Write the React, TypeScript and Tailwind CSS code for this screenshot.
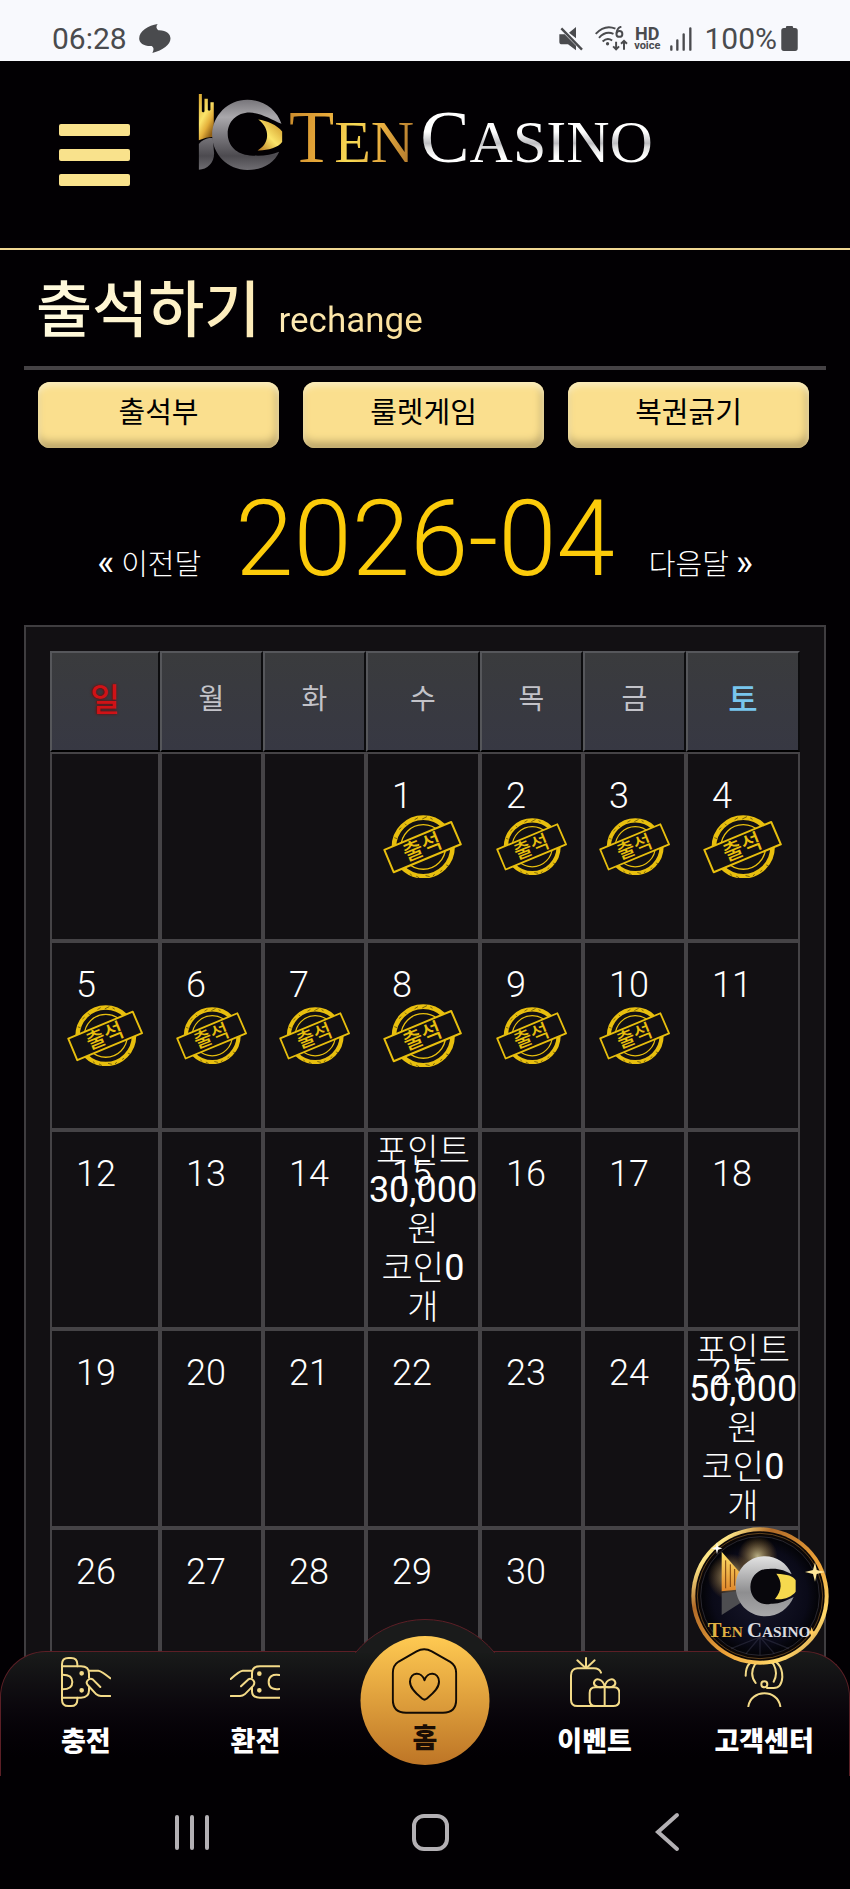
import React from "react";

const kr = "font-['Roboto','Noto_Sans_CJK_KR',sans-serif]";

function LogoMark({ className, id }: { className: string; id: string }) {
  return (
    <svg viewBox="55 40 255 235" className={className} aria-hidden="true">
      <defs>
        <linearGradient id={`${id}-silver`} gradientUnits="userSpaceOnUse" x1="0" y1="60" x2="0" y2="272">
          <stop offset="0" stopColor="#77757a" />
          <stop offset="0.25" stopColor="#aaa8ac" />
          <stop offset="0.5" stopColor="#7d7b80" />
          <stop offset="0.8" stopColor="#4c4a4f" />
          <stop offset="1" stopColor="#6f6d72" />
        </linearGradient>
        <linearGradient id={`${id}-gold`} x1="0" y1="0" x2="0.6" y2="1">
          <stop offset="0" stopColor="#d9a52c" />
          <stop offset="0.5" stopColor="#fbe46a" />
          <stop offset="0.75" stopColor="#e3ae3a" />
          <stop offset="1" stopColor="#8f5f16" />
        </linearGradient>
        <linearGradient id={`${id}-eye`} x1="0" y1="1" x2="0.8" y2="0">
          <stop offset="0" stopColor="#b5771f" />
          <stop offset="0.5" stopColor="#fbe56a" />
          <stop offset="1" stopColor="#d19a2c" />
        </linearGradient>
      </defs>
      <path d="M57 43H66V96Q70 101 74 96V57H84V91Q88 96 92 91V68H102V172Q78 173 57 182Z" fill={`url(#${id}-gold)`} />
      <path d="M57 194C68 180 84 175 99 176L103 222C103 250 82 270 57 271Z" fill={`url(#${id}-silver)`} />
      <path d="M306 133C292 90 252 60 203 60C145 60 97 108 97 166C97 225 145 272 203 272C248 272 284 252 299 217C272 229 245 230 210 228C172 226 144 199 144 163C144 126 172 99 210 99C245 100 275 120 306 133Z" fill={`url(#${id}-silver)`} />
      <path d="M236 120C262 124 292 136 308 156V188C295 206 262 214 234 213C270 194 274 148 236 120Z" fill={`url(#${id}-eye)`} />
    </svg>
  );
}

function Stamp() {
  return (
    <svg viewBox="0 0 238 192" className="mx-auto block w-[72%]" role="img" aria-label="출석">
      <g fill="none" stroke="#e8bf0e">
        <circle cx="121" cy="96" r="88" strokeWidth="14" />
        <circle cx="121" cy="96" r="67" strokeWidth="4" />
      </g>
      <g fill="none" stroke="#3a300c" strokeWidth="2">
        <path d="M95 14l10 -6M118 12l14 -7M142 9l7 4M48 44l7 -6M66 26l5 5M34 68l8 3M100 184l9 5M128 182l12 3M150 184l5 -6M172 170l6 -4M190 150l7 3M82 176l4 6" />
      </g>
      <path d="M4 105L205 21L234 88L32 172Z" fill="#121013" stroke="#e8bf0e" strokeWidth="6" strokeLinejoin="round" />
      <text x="118" y="119" textAnchor="middle" transform="rotate(-22 118 96)" fontSize="65" fontWeight="500" fill="#e8bf0e" fontFamily="'Noto Sans CJK KR', sans-serif">
        출석
      </text>
    </svg>
  );
}

function StatusBar() {
  return (
    <div className="flex h-[61px] shrink-0 items-center justify-between bg-[#f8f9fd] pt-4 pr-[52px] pl-[52px] text-[30px] text-[#4a4b4e]">
      <div className="flex items-center gap-3">
        <span>06:28</span>
        <svg viewBox="0 0 96 88" className="h-[29px] w-8" fill="#4a4b4e" aria-hidden="true">
          <path d="M56 0C50 8 52 14 58 19C82 18 95 30 95 44C95 62 72 80 40 88C44 80 46 72 38 67C14 68 0 58 0 44C0 22 28 4 56 0Z" />
        </svg>
      </div>
      <div className="flex items-center">
        <svg viewBox="0 0 70 72" className="mr-3 h-6 w-6" fill="#4a4b4e" aria-hidden="true">
          <path d="M0 22H16L50 56V70L26 52H8Q0 52 0 44ZM50 0V34L29 17Z" />
          <path d="M6 4L68 68" stroke="#4a4b4e" strokeWidth="7" />
        </svg>
        <svg viewBox="0 0 100 76" className="mr-[6px] h-[25px] w-[33px]" fill="none" stroke="#4a4b4e" strokeWidth="6" aria-hidden="true">
          <path d="M2 24Q30 -6 62 8M12 36Q32 14 56 24M23 47Q37 34 52 44" />
          <circle cx="38" cy="54" r="5" fill="#4a4b4e" stroke="none" />
          <circle cx="74" cy="24" r="9" />
          <path d="M66 22Q66 6 80 2M64 48V70M55 62L64 71L73 62M88 72V46M79 54L88 45L97 54" />
        </svg>
        <span className="mr-[10px] flex flex-col items-center font-bold">
          <span className="text-[18px] leading-[14px]">HD</span>
          <span className="text-[11px] leading-[10px]">voice</span>
        </span>
        <svg viewBox="0 0 66 72" className="mr-3 h-6 w-[22px]" stroke="#4a4b4e" strokeWidth="7" strokeLinecap="round" aria-hidden="true">
          <path d="M4 58V68M22 40V68M41 22V68M61 4V68" />
        </svg>
        <span>100%</span>
        <svg viewBox="0 0 50 76" className="ml-1 h-[25px] w-[17px]" fill="#4a4b4e" aria-hidden="true">
          <path d="M14 4Q14 0 18 0H32Q36 0 36 4V6H42Q50 6 50 14V68Q50 76 42 76H8Q0 76 0 68V14Q0 6 8 6H14Z" />
        </svg>
      </div>
    </div>
  );
}

function Header() {
  return (
    <header className="flex h-[189px] items-start border-b-2 border-[#f0d793] pl-[59px]">
      <button type="button" aria-label="메뉴" className="mt-[63px] flex w-[71px] flex-col gap-[13px]">
        <span className="h-3 rounded-[2px] bg-[#f9e28c]" />
        <span className="h-3 rounded-[2px] bg-[#f9e28c]" />
        <span className="h-3 rounded-[2px] bg-[#f9e28c]" />
      </button>
      <a href="#" className="mt-8 ml-[68px] flex items-start">
        <LogoMark id="top" className="h-[78px] w-[85px]" />
        <span className="ml-[6px] flex items-baseline gap-[6px] pt-2 font-['Liberation_Serif',serif] text-[60px] leading-[72px]">
          <span className="bg-[linear-gradient(100deg,#c98a2c_0%,#e8a93a_30%,#f8dc55_50%,#eab041_70%,#a8702a_100%)] bg-clip-text text-transparent">
            <span className="text-[74px]">T</span>EN
          </span>
          <span className="bg-[linear-gradient(180deg,#fff_40%,#bdbdc1_55%,#dededf_60%,#fff_72%)] bg-clip-text text-transparent">
            <span className="text-[74px]">C</span>ASINO
          </span>
        </span>
      </a>
    </header>
  );
}

const weekdays = ["일", "월", "화", "수", "목", "금", "토"];
const attended = [1, 2, 3, 4, 5, 6, 7, 8, 9, 10];
const rewards: Record<number, string> = { 15: "30,000", 25: "50,000" };
const weeks: (number | null)[][] = [0, 1, 2, 3, 4].map((w) =>
  [0, 1, 2, 3, 4, 5, 6].map((d) => {
    const n = w * 7 + d - 2;
    return n >= 1 && n <= 30 ? n : null;
  }),
);

function weekdayClass(i: number) {
  if (i === 0) return "text-[32px] font-medium text-[#d01216] [text-shadow:0_0_3px_#700]";
  if (i === 6) return "text-[32px] font-medium text-[#78c6ee]";
  return "text-[28px] font-normal text-[#c3c3c9]";
}

function Calendar() {
  return (
    <div className="mx-6 border-2 border-[#3f3d40] bg-[#121013] p-6">
      <table className="w-full table-fixed border-separate border-spacing-0">
        <colgroup>
          <col className="w-[110px]" />
          <col className="w-[103px]" />
          <col className="w-[103px]" />
          <col className="w-[114px]" />
          <col className="w-[103px]" />
          <col className="w-[103px]" />
          <col className="w-[114px]" />
        </colgroup>
        <thead>
          <tr className="h-[101px]">
            {weekdays.map((d, i) => (
              <th
                key={d}
                scope="col"
                className={`border-2 border-t-[#56575b] border-r-[#0c0c0e] border-b-black border-l-[#56575b] bg-linear-to-b from-[#3a3b3d] to-[#373843] p-0 pb-1 ${weekdayClass(i)}`}
              >
                {d}
              </th>
            ))}
          </tr>
        </thead>
        <tbody>
          {weeks.map((week, w) => (
            <tr key={w} className="h-[189px]">
              {week.map((day, i) => (
                <td key={i} className="relative border-2 border-[#454346] p-0 text-center align-middle">
                  {day !== null && (
                    <span className="absolute top-[21px] left-6 text-[36px] leading-[42px] font-light">{day}</span>
                  )}
                  {day !== null && attended.includes(day) && <Stamp />}
                  {day !== null && rewards[day] && (
                    <p className="text-[36px] leading-[39px] font-light">
                      <span className="text-[34px]">포인트</span>
                      <br />
                      <b className="font-normal">{rewards[day]}</b>
                      <br />
                      <span className="text-[34px]">원</span>
                      <br />
                      <span className="text-[34px]">코인</span>
                      <b className="font-normal">0</b>
                      <br />
                      <span className="text-[34px]">개</span>
                    </p>
                  )}
                </td>
              ))}
            </tr>
          ))}
        </tbody>
      </table>
    </div>
  );
}

function NavIcon({ children }: { children: React.ReactNode }) {
  return (
    <svg viewBox="0 0 150 150" className="size-[50px]" fill="none" stroke="#f3da88" strokeWidth="6" strokeLinecap="round" strokeLinejoin="round" aria-hidden="true">
      {children}
    </svg>
  );
}

const navItems = [
  {
    label: "충전",
    icon: (
      <NavIcon>
        <path d="M3 28V22Q3 3 22 3H30Q49 3 49 22V28M3 122V128Q3 147 22 147H30Q49 147 49 128V122M3 28V122" />
        <path d="M3 28H60Q84 28 84 50V62M3 122H60Q84 122 84 100V92M5 53Q34 53 34 75Q34 97 5 97" />
        <path d="M84 41H112Q122 42 148 64M118 90L96 68Q88 62 80 70Q74 76 80 84L106 112Q112 117 120 117H148" />
        <circle cx="62" cy="49" r="4" fill="#f3da88" />
        <circle cx="62" cy="100" r="4" fill="#f3da88" />
      </NavIcon>
    ),
  },
  {
    label: "환전",
    icon: (
      <NavIcon>
        <path d="M148 28H90Q66 28 66 50V62M148 122H90Q66 122 66 103V92M148 54Q116 50 116 75Q116 100 148 96" />
        <path d="M64 41H38Q28 42 2 66M33 88L54 68Q62 62 70 70Q76 77 70 86L44 112Q38 117 30 117H2" />
        <circle cx="88" cy="50" r="4" fill="#f3da88" />
        <circle cx="88" cy="100" r="4" fill="#f3da88" />
      </NavIcon>
    ),
  },
  { label: "홈", icon: null },
  {
    label: "이벤트",
    icon: (
      <NavIcon>
        <path d="M93 47Q88 34 72 34H22Q3 36 3 56V128Q3 147 22 147H130Q148 147 148 130V108Q148 91 132 91H76Q59 91 59 108V130Q59 147 76 147M104 91V147" />
        <path d="M104 88C88 94 70 88 72 76C78 60 98 66 104 88C110 66 130 60 136 76C138 88 120 94 104 88M48 3V32M22 10L46 32M74 10L50 32" />
      </NavIcon>
    ),
  },
  {
    label: "고객센터",
    icon: (
      <NavIcon>
        <path d="M28 148C36 96 116 96 124 148M50 78Q30 52 48 22Q76 -4 104 22Q118 50 104 74M20 56Q20 4 76 3Q130 8 130 60Q128 93 104 93H84" />
        <circle cx="76" cy="82" r="9" />
      </NavIcon>
    ),
  },
];

function BottomNav() {
  return (
    <nav className="absolute inset-x-0 bottom-0">
      <div className="h-[125px] rounded-t-[46px] border border-b-0 border-[#5c1f26] bg-linear-to-b from-[#191b1a] to-[#020003] to-85%">
        <ul className="grid h-full grid-cols-5">
          {navItems.map((item) =>
            item.icon ? (
              <li key={item.label}>
                <a href="#" className="flex flex-col items-center pt-[5px] text-[27px] leading-[34px] font-black whitespace-nowrap text-white">
                  {item.icon}
                  <span className="mt-[18px]">{item.label}</span>
                </a>
              </li>
            ) : (
              <li key={item.label} className="relative">
                <div className="absolute -top-[33px] left-1/2 h-[34px] w-[180px] -translate-x-1/2 overflow-hidden">
                  <div className="size-[180px] rounded-full border border-[#5c1f26] bg-[#1a1b1b]" />
                </div>
                <a
                  href="#"
                  className="absolute -top-4 left-1/2 flex size-[129px] -translate-x-1/2 flex-col items-center rounded-full bg-linear-to-b from-[#ffca52] to-[#bd7526] pt-3 text-[27px] leading-[34px] font-black text-[#1a0d04]"
                >
                  <svg viewBox="0 0 200 200" className="size-[66px]" fill="none" stroke="#120b04" strokeWidth="6" strokeLinejoin="round" aria-hidden="true">
                    <path d="M4 76Q4 52 22 41L76 10Q99 -3 122 10L178 42Q196 53 196 76V156Q196 196 156 196H44Q4 196 4 156Z" />
                    <path d="M100 98C92 70 57 72 56 102C56 124 80 142 94 154Q100 159 106 154C120 142 144 124 144 102C143 72 108 70 100 98Z" />
                  </svg>
                  <span className="mt-2">{item.label}</span>
                </a>
              </li>
            ),
          )}
        </ul>
      </div>
    </nav>
  );
}

function Badge() {
  return (
    <a href="#" aria-label="Ten Casino" className="absolute right-[21px] bottom-[111px] size-[138px]">
      <svg viewBox="0 0 414 414" className="size-full">
        <defs>
          <linearGradient id="bd-rim" x1="0" y1="0" x2="1" y2="1">
            <stop offset="0" stopColor="#b9732a" />
            <stop offset="0.16" stopColor="#ffe98a" />
            <stop offset="0.3" stopColor="#b06a28" />
            <stop offset="0.6" stopColor="#f0a63a" />
            <stop offset="0.8" stopColor="#ffd86a" />
            <stop offset="1" stopColor="#a5602a" />
          </linearGradient>
          <radialGradient id="bd-face">
            <stop offset="0" stopColor="#18182c" />
            <stop offset="0.8" stopColor="#0a0a18" />
            <stop offset="1" stopColor="#030306" />
          </radialGradient>
          <radialGradient id="bd-glow">
            <stop offset="0" stopColor="#fff3b0" stopOpacity="0.7" />
            <stop offset="1" stopColor="#e8a02c" stopOpacity="0" />
          </radialGradient>
          <linearGradient id="bd-silver" x1="0" y1="0" x2="0" y2="1">
            <stop offset="0" stopColor="#e2e2e2" />
            <stop offset="0.6" stopColor="#8e8e90" />
            <stop offset="1" stopColor="#a8a8aa" />
          </linearGradient>
          <linearGradient id="bd-gold" x1="0" y1="0" x2="0" y2="1">
            <stop offset="0" stopColor="#ffe36a" />
            <stop offset="1" stopColor="#e0862a" />
          </linearGradient>
        </defs>
        <circle cx="207" cy="207" r="206" fill="url(#bd-rim)" />
        <circle cx="207" cy="207" r="194" fill="#0a0606" />
        <circle cx="207" cy="207" r="188" fill="none" stroke="#8d602a" strokeWidth="2" />
        <circle cx="207" cy="207" r="178" fill="url(#bd-face)" stroke="#3a3844" strokeWidth="2" />
        <g stroke="#565672" strokeOpacity="0.3" strokeWidth="4">
          <path d="M207 330L120 365M207 330L165 380M207 330L207 384M207 330L250 380M207 330L294 365" />
        </g>
        <circle cx="120" cy="150" r="70" fill="url(#bd-glow)" />
        <circle cx="200" cy="88" r="60" fill="url(#bd-glow)" />
        <path d="M92 74L150 140L136 188L92 193Z" fill="url(#bd-gold)" />
        <path d="M104 100V184M118 112V180M131 126V176" stroke="#7a4210" strokeWidth="3" />
        <path d="M92 198L138 192L148 228L92 264Z" fill="#4d4d50" />
        <circle cx="238" cy="180" r="60" fill="#08070c" />
        <path d="M302 142C288 108 256 88 222 88C172 88 134 128 134 178C134 228 172 268 222 268C262 268 294 244 308 210C284 222 262 232 240 230C208 240 178 212 178 180C178 148 204 124 232 126C258 122 284 130 302 142Z" fill="url(#bd-silver)" />
        <path d="M256 140C290 142 306 146 314 160V194C302 210 276 220 252 216C274 190 274 164 256 140Z" fill="#f6d94e" />
        <path d="M372 106L377 129L402 135L377 141L372 164L366 141L342 135L366 129Z" fill="#ffe79a" />
        <path d="M78 46L81 60L94 64L81 68L78 82L75 68L62 64L75 60Z" fill="#fff" />
        <path d="M362 300L366 312L376 316L366 320L362 332L358 320L348 316L358 312Z" fill="#ffc95c" />
        <g fontFamily="'Liberation Serif', serif" fontWeight="700" fontSize="46">
          <text x="50" y="331" fill="#e0b142"><tspan fontSize="62">T</tspan>EN</text>
          <text x="168" y="331" fill="#dcdce0"><tspan fontSize="62">C</tspan>ASINO</text>
        </g>
      </svg>
    </a>
  );
}

function SystemNav() {
  return (
    <div className="flex h-[113px] shrink-0 items-center justify-between bg-[#020003] pr-[162px] pb-[2px] pl-[172px]">
      <button type="button" aria-label="최근 앱">
        <svg viewBox="0 0 40 40" className="size-10" stroke="#b3b0b4" strokeWidth="4" strokeLinecap="round">
          <path d="M5 5V36M20 5V36M35 5V36" />
        </svg>
      </button>
      <button type="button" aria-label="홈 화면">
        <svg viewBox="0 0 40 40" className="size-10" fill="none" stroke="#b3b0b4" strokeWidth="4">
          <rect x="4" y="4" width="33" height="33" rx="10" />
        </svg>
      </button>
      <button type="button" aria-label="뒤로">
        <svg viewBox="0 0 40 40" className="size-10" fill="none" stroke="#b3b0b4" strokeWidth="4" strokeLinecap="round">
          <path d="M29 3L10 20L29 37" />
        </svg>
      </button>
    </div>
  );
}

export default function App() {
  return (
    <div className={`flex h-screen flex-col bg-[#020003] text-white ${kr}`}>
      <StatusBar />
      <div className="relative min-h-0 flex-1">
        <main className="h-full overflow-y-auto [scrollbar-width:none]">
          <Header />
          <div className="mx-6 border-b-4 border-[#454245] px-3 pt-[14px] pb-2">
            <h1 className="inline-flex items-baseline gap-[18px] bg-linear-to-r from-[#fffbe0] to-[#fbdf98] bg-clip-text text-transparent">
              <span className="text-[61px] leading-[94px] font-medium">출석하기</span>
              <span className="text-[35px]">rechange</span>
            </h1>
          </div>
          <div className="mt-3 mr-[41px] ml-[38px] grid grid-cols-3 gap-6 text-[29px] leading-[34px] text-black">
            {["출석부", "룰렛게임", "복권긁기"].map((label) => (
              <button
                key={label}
                type="button"
                className="h-[66px] rounded-xl bg-[#fadf8e] pb-1 shadow-[inset_0_4px_6px_#fbeec0,inset_-2px_-6px_8px_#b8a268]"
              >
                {label}
              </button>
            ))}
          </div>
          <div className="mt-8 mb-[25px] flex items-baseline justify-center gap-[34px] text-[29px] font-light">
            <a href="#">
              <span className="text-[36px] leading-[34px] font-normal">«</span> 이전달
            </a>
            <h2 className="text-[105px] leading-[120px] text-[#fccb0a]">2026-04</h2>
            <a href="#">
              다음달 <span className="text-[36px] leading-[34px] font-normal">»</span>
            </a>
          </div>
          <Calendar />
        </main>
        <BottomNav />
        <Badge />
      </div>
      <SystemNav />
    </div>
  );
}
